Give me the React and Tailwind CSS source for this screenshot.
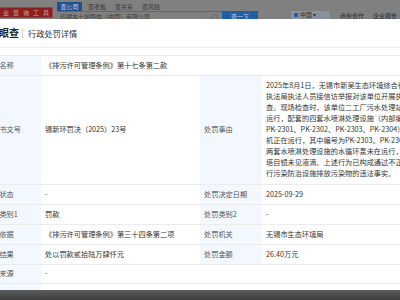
export default function App() {
  const reason = [
    "2025年8月1日，无锡市新吴生态环境综合行政",
    "执法局执法人员接信访举报对该单位开展执法检",
    "查。现场检查时，该单位二工厂污水处理站正常",
    "运行，配套的四套水喷淋处理设施（内部编号为",
    "PK-2301、PK-2302、PK-2303、PK-2304）风",
    "机正在运行，其中编号为PK-2303、PK-2304的",
    "两套水喷淋处理设施的水循环泵未在运行，喷淋",
    "塔目镜未见液滴。上述行为已构成通过不正常运",
    "行污染防治设施排放污染物的违法事实。",
  ];
  const lab = "bg-[#f3f8fe] pl-[4px] flex items-center text-[#555] border-t border-[#ececec] whitespace-nowrap";
  const val = "pl-[4px] flex items-center text-[#333] border-t border-[#ececec] whitespace-nowrap";
  const short = [
    ["处罚状态", "-", "处罚决定日期", "2025-09-29"],
    ["处罚类别1", "罚款", "处罚类别2", "-"],
    ["处罚依据", "《排污许可管理条例》第三十四条第二项", "处罚机关", "无锡市生态环境局"],
    ["处罚结果", "处以罚款贰拾陆万肆仟元", "处罚金额", "26.40万元"],
  ];
  return (
    <div className="w-[400px] h-[300px] overflow-hidden bg-[#808080] flex flex-col text-[7.2px] leading-none" style={{ fontFamily: '"Noto Sans CJK SC", "Noto Sans", sans-serif' }}>
      {/* dimmed page behind */}
      <div className="h-[19px] flex shrink-0 overflow-hidden">
        <div className="ml-[-10px] mt-[7px] h-[11px] w-[63px] shrink-0 bg-[#8c1f1f] border border-[#a04545] flex items-center pl-[2px] text-[6px] text-[#d8a4a4] tracking-[4px] whitespace-nowrap">企业查询工具</div>
        <div className="ml-[4px] flex flex-col w-[201px] shrink-0">
          <div className="flex items-center h-[9px] mt-[2px] text-[6px] text-[#3a3a3a]">
            <div className="w-[25px] h-[9px] bg-[#22508c] text-[#c9d5e6] flex items-center justify-center">查公司</div>
            <div className="ml-[6px]">查老板</div>
            <div className="ml-[9px]">查关系</div>
            <div className="ml-[9px]">查风险</div>
          </div>
          <div className="flex h-[9px]">
            <div className="flex-1 border-t border-[#4d6b94] flex items-center pl-[3px] text-[6px] text-[#3f3f3f] pt-[2px] whitespace-nowrap">
              <span>印湖本土地导体（中国）有限公司</span>
              <span className="ml-auto mr-[4px] w-[6px] h-[6px] rounded-full border border-[#6a6a6a]"></span>
            </div>
            <div className="w-[36px] bg-[#1f5fa6] text-[#c6d3e6] text-[6px] flex items-center justify-center pt-[2px]">查一下</div>
          </div>
        </div>
        <div className="ml-[33px] mt-[11px] h-[8px] w-[39px] shrink-0 bg-[#8a919a] flex items-center pl-[3px] text-[6px] text-[#2e2e2e] whitespace-nowrap">
          <span className="w-[4px] h-[4px] bg-[#1f5fa6] mr-[2px]"></span>中国 ▾
        </div>
        <div className="ml-[10px] mt-[13px] text-[6px] text-[#2e2e2e] whitespace-nowrap">商务合作</div>
        <div className="ml-[9px] mt-[13px] text-[6px] text-[#2e2e2e] whitespace-nowrap">企业报告</div>
      </div>

      {/* modal */}
      <div className="h-[271px] shrink-0 bg-white overflow-hidden flex flex-col">
        <div className="h-[29px] shrink-0 flex items-center border-b border-[#eeeeee] whitespace-nowrap">
          <span className="ml-[-11px] text-[10px] font-bold text-[#222]">天眼查</span>
          <span className="ml-[3px] w-px h-[9px] bg-[#d0d0d0]"></span>
          <span className="ml-[5px] text-[8.2px] text-[#333]">行政处罚详情</span>
        </div>
        <div className="pt-[7px] ml-[-19px]">
          <div className="grid grid-cols-[60px_159px_62px_260px]">
            <div className={`${lab} h-[20px]`}>处罚名称</div>
            <div className={`${val} h-[20px] col-span-3 pl-[3px]`}>《排污许可管理条例》第十七条第二款</div>

            <div className={`${lab} h-[109px]`}>决定书文号</div>
            <div className={`${val} h-[109px] pl-[3px]`}>锡新环罚决（2025）23号</div>
            <div className={`${lab} h-[109px]`}>处罚事由</div>
            <div className="border-t border-[#ececec] pl-[4px] pt-[4px] pb-[5px] text-[#333] leading-[11px] whitespace-nowrap">
              {reason.map((l, i) => (
                <div key={i}>{l}</div>
              ))}
            </div>

            {short.map((r, i) => (
              <div key={i} className="contents">
                <div className={`${lab} h-[20px]`}>{r[0]}</div>
                <div className={`${val} h-[20px] pl-[3px]`}>{r[1]}</div>
                <div className={`${lab} h-[20px]`}>{r[2]}</div>
                <div className={`${val} h-[20px]`}>{r[3]}</div>
              </div>
            ))}

            <div className={`${lab} h-[19px]`}>数据来源</div>
            <div className={`${val} h-[19px] pl-[3px]`}>-</div>
            <div className="border-t border-[#ececec] h-[19px]"></div>
            <div className="border-t border-[#ececec] h-[19px]"></div>

            <div className="bg-[#f3f8fe] pl-[4px] pt-[6px] text-[#555] border-t border-[#ececec] whitespace-nowrap h-[20px]">公示日期</div>
            <div className="pl-[3px] pt-[6px] text-[#333] border-t border-[#ececec] whitespace-nowrap h-[20px]">2025-10-09</div>
            <div className="border-t border-[#ececec] h-[20px]"></div>
            <div className="border-t border-[#ececec] h-[20px]"></div>
          </div>
        </div>
      </div>
      <div className="flex-1 bg-gradient-to-b from-[#5c5c5c] to-[#3f3f3f]"></div>
    </div>
  );
}
